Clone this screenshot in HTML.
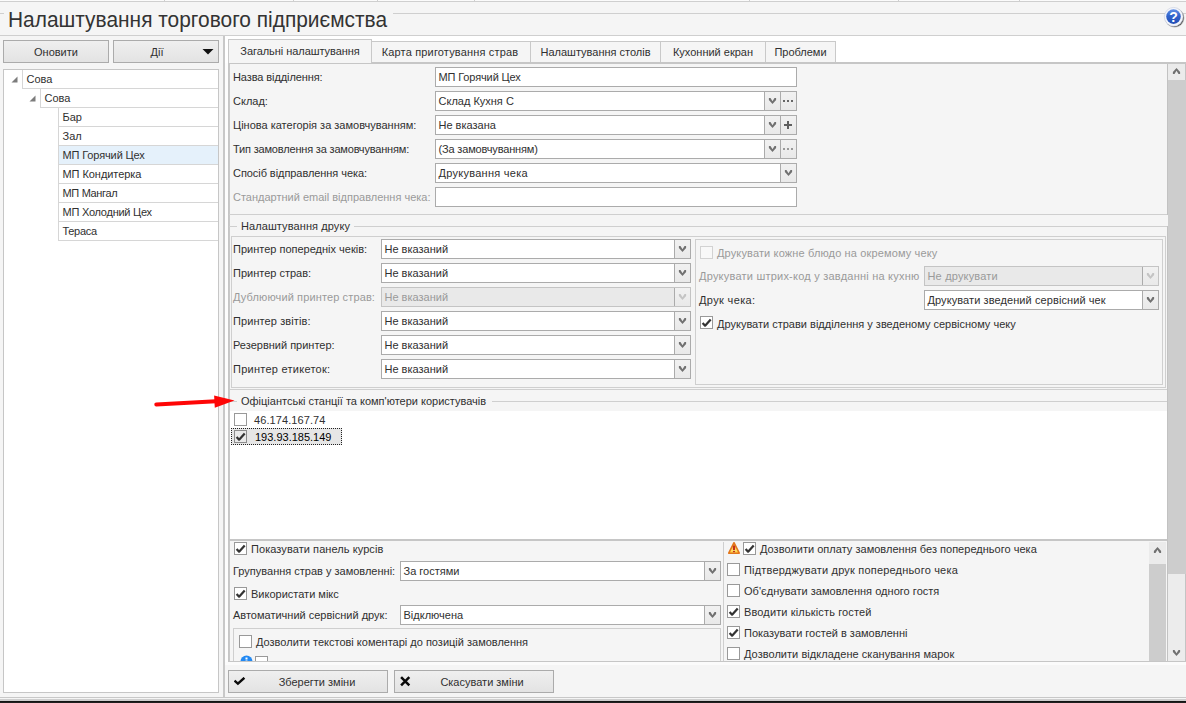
<!DOCTYPE html>
<html lang="uk">
<head>
<meta charset="utf-8">
<title>Налаштування торгового підприємства</title>
<style>
*{box-sizing:border-box;margin:0;padding:0}
html,body{width:1186px;height:703px;overflow:hidden;background:#f5f5f5}
body{font-family:"Liberation Sans","DejaVu Sans",sans-serif;font-size:11px;color:#303030;position:relative}
#app{position:absolute;left:0;top:0;width:1186px;height:703px;overflow:hidden;background:#f5f5f5}
.a{position:absolute}
.hl{position:absolute;height:1px;background:#cfcfcf}
.vl{position:absolute;width:1px;background:#cfcfcf}
.t{position:absolute;white-space:nowrap;height:20px;line-height:20px}
.dis{color:#9a9a9a}
.btn{position:absolute;border:1px solid #ababab;background:linear-gradient(#efefef,#e3e3e3);text-align:center;line-height:21px;padding-top:1px;height:23px;white-space:nowrap}
.inp{position:absolute;height:20px;border:1px solid #ababab;background:#fff;line-height:18px;padding-left:2.5px;white-space:nowrap;overflow:hidden}
.inp.d{background:#e9e9e9;color:#9a9a9a;border-color:#c4c4c4}
.dd{position:absolute;top:0;right:0;width:16px;height:18px;border-left:1px solid #ababab;background:linear-gradient(#f1f1f1,#e9e9e9)}
.dd svg{position:absolute;left:3px;top:5px}
.sb{position:absolute;width:17px;height:20px;border:1px solid #ababab;background:linear-gradient(#f1f1f1,#e9e9e9)}
.cb{position:absolute;width:13px;height:13px;border:1px solid #999;background:#fff}
.cb.d{border-color:#d2d2d2;background:#f8f8f8}
.cb svg{position:absolute;left:0;top:0}
.tab{position:absolute;top:41px;height:22px;border:1px solid #c9c9c9;border-bottom:none;background:#f5f5f5;line-height:20px;text-align:center;white-space:nowrap}
.tab.act{top:39px;height:24px;line-height:23px;z-index:2}
.row{position:absolute;height:19px;line-height:18px;border-bottom:1px solid #d6d6d6;border-left:1px solid #d6d6d6;background:#fff;padding-left:3.5px;right:0;white-space:nowrap}
</style>
</head>
<body>
<div id="app">

<!-- top strip -->
<div class="a" style="left:0;top:0;width:1186px;height:1px;background:#fbfbfb"></div>
<div class="hl" style="left:0;top:1px;width:1186px"></div>
<div class="vl" style="left:164px;top:0;height:1px"></div>
<div class="vl" style="left:293px;top:0;height:1px"></div>
<div class="vl" style="left:377px;top:0;height:1px"></div>
<div class="vl" style="left:474px;top:0;height:1px"></div>
<div class="vl" style="left:749px;top:0;height:1px"></div>
<div class="vl" style="left:898px;top:0;height:1px"></div>
<div class="vl" style="left:1019px;top:0;height:1px"></div>

<!-- title -->
<div class="hl" style="left:0;top:13px;width:4px"></div>
<div class="hl" style="left:393px;top:13px;width:793px"></div>
<div class="a" id="title" style="left:8px;top:5px;height:29px;line-height:29px;font-size:22.5px;color:#333;white-space:nowrap;transform:scaleX(0.929);transform-origin:0 0">Налаштування торгового підприємства</div>
<svg class="a" style="left:1162px;top:5px" width="24" height="24" viewBox="0 0 24 24">
  <defs>
    <linearGradient id="hg" x1="0" y1="0" x2="0" y2="1"><stop offset="0" stop-color="#5f8fe6"/><stop offset="0.45" stop-color="#3264cc"/><stop offset="1" stop-color="#234fb6"/></linearGradient>
    <radialGradient id="hs" cx="0.5" cy="0.5" r="0.5"><stop offset="0.75" stop-color="#444" stop-opacity="0.75"/><stop offset="1" stop-color="#444" stop-opacity="0"/></radialGradient>
  </defs>
  <circle cx="12.7" cy="12.9" r="10.2" fill="url(#hs)"/><circle cx="12.45" cy="12.6" r="9.35" fill="#3c3c3c" opacity="0.8"/>
  <circle cx="11.7" cy="11.8" r="9.4" fill="#f3f5fb" stroke="#c9cfdf" stroke-width="0.6"/>
  <circle cx="11.5" cy="11.6" r="7.3" fill="url(#hg)"/>
  <text x="11.5" y="16.6" text-anchor="middle" font-family="Liberation Sans, sans-serif" font-weight="bold" font-size="14" fill="#fff">?</text>
</svg>
<div class="hl" style="left:0;top:35px;width:1186px"></div>

<!-- left panel -->
<div class="btn" style="left:3px;top:40px;width:106px">Оновити</div>
<div class="btn" style="left:113px;top:40px;width:106px"><span style="position:absolute;left:0;width:86px;text-align:center">Дії</span>
  <svg class="a" style="left:88px;top:8px" width="12" height="6" viewBox="0 0 12 6"><path d="M0.5 0H11.5L6 5.5Z" fill="#111"/></svg>
</div>
<div class="a" id="tree" style="left:3px;top:69px;width:216px;height:624px;background:#fff;border:1px solid #c6c6c6">
  <svg class="a" style="left:7px;top:6px" width="7" height="7" viewBox="0 0 7 7"><path d="M6.5 0.5V6.5H0.5Z" fill="#7c7c7c"/></svg>
  <svg class="a" style="left:25px;top:25px" width="7" height="7" viewBox="0 0 7 7"><path d="M6.5 0.5V6.5H0.5Z" fill="#7c7c7c"/></svg>
  <div class="row" style="left:18px;top:0px">Сова</div>
  <div class="row" style="left:36px;top:19px">Сова</div>
  <div class="row" style="left:54px;top:38px">Бар</div>
  <div class="row" style="left:54px;top:57px">Зал</div>
  <div class="row" style="left:54px;top:76px;background:#e5f1fb;letter-spacing:-0.129px">МП Горячий Цех</div>
  <div class="row" style="left:54px;top:95px;letter-spacing:-0.058px">МП Кондитерка</div>
  <div class="row" style="left:54px;top:114px;letter-spacing:-0.333px">МП Мангал</div>
  <div class="row" style="left:54px;top:133px;letter-spacing:-0.240px">МП Холодний Цех</div>
  <div class="row" style="left:54px;top:152px;letter-spacing:-0.300px">Тераса</div>
</div>

<!-- splitter -->
<div class="a" style="left:223px;top:36px;width:2px;height:662px;background:#c8c8c8"></div>

<!-- tab strip -->
<div class="a" style="left:225px;top:36px;width:3px;height:629px;background:#fdfdfd"></div>
<div class="a" style="left:225px;top:36px;width:961px;height:27px;background:#fff"></div>
<div class="tab act" style="left:228px;width:144px;letter-spacing:-0.057px">Загальні налаштування</div>
<div class="tab" style="left:371px;width:160px;padding-right:2px;letter-spacing:0.167px">Карта приготування страв</div>
<div class="tab" style="left:530px;width:131px">Налаштування столів</div>
<div class="tab" style="left:660px;width:106px">Кухонний екран</div>
<div class="tab" style="left:765px;width:71px">Проблеми</div>

<!-- tab page -->
<div class="a" id="page" style="left:228px;top:63px;width:958px;height:598px;border:1px solid #c6c6c6;border-right:none;border-bottom:none;background:#f5f5f5;overflow:hidden">
<!-- coordinates inside #page are offset by (229,64) -->
<div class="a" id="pg" style="left:-229px;top:-64px;width:1186px;height:703px">

<div class="vl" style="left:229px;top:64px;height:598px;background:#c9c9c9"></div>
<!-- general fields -->
<div class="t" style="left:233px;top:67px;letter-spacing:-0.094px">Назва відділення:</div>
<div class="inp" style="left:435px;top:67px;width:362px;letter-spacing:-0.129px">МП Горячий Цех</div>
<div class="t" style="left:233px;top:91px">Склад:</div>
<div class="inp" style="left:435px;top:91px;width:346px">Склад Кухня С<div class="dd"><svg width="9" height="8" viewBox="0 0 9 8"><path d="M0.9 0.9H2.5L4.5 4.2L6.5 0.9H8.1V3L4.5 7.1L0.9 3Z" fill="#707070"/></svg></div></div>
<div class="sb" style="left:780px;top:91px"><svg class="a" style="left:2px;top:8px" width="10" height="2" viewBox="0 0 10 2"><rect x="0" y="0" width="2" height="2" fill="#666"/><rect x="4" y="0" width="2" height="2" fill="#666"/><rect x="8" y="0" width="2" height="2" fill="#666"/></svg></div>
<div class="t" style="left:233px;top:115px">Цінова категорія за замовчуванням:</div>
<div class="inp" style="left:435px;top:115px;width:346px">Не вказана<div class="dd"><svg width="9" height="8" viewBox="0 0 9 8"><path d="M0.9 0.9H2.5L4.5 4.2L6.5 0.9H8.1V3L4.5 7.1L0.9 3Z" fill="#707070"/></svg></div></div>
<div class="sb" style="left:780px;top:115px"><svg class="a" style="left:3px;top:5px" width="8" height="8" viewBox="0 0 8 8"><rect x="3" y="0" width="2" height="8" fill="#5f5f5f"/><rect x="0" y="3" width="8" height="2" fill="#5f5f5f"/></svg></div>
<div class="t" style="left:233px;top:139px;letter-spacing:-0.178px">Тип замовлення за замовчуванням:</div>
<div class="inp" style="left:435px;top:139px;width:346px;letter-spacing:-0.161px">(За замовчуванням)<div class="dd"><svg width="9" height="8" viewBox="0 0 9 8"><path d="M0.9 0.9H2.5L4.5 4.2L6.5 0.9H8.1V3L4.5 7.1L0.9 3Z" fill="#707070"/></svg></div></div>
<div class="sb" style="left:780px;top:139px"><svg class="a" style="left:2px;top:8px" width="10" height="2" viewBox="0 0 10 2"><rect x="0" y="0" width="2" height="2" fill="#999"/><rect x="4" y="0" width="2" height="2" fill="#999"/><rect x="8" y="0" width="2" height="2" fill="#999"/></svg></div>
<div class="t" style="left:233px;top:163px;letter-spacing:-0.064px">Спосіб відправлення чека:</div>
<div class="inp" style="left:435px;top:163px;width:362px;letter-spacing:0.27px">Друкування чека<div class="dd"><svg width="9" height="8" viewBox="0 0 9 8"><path d="M0.9 0.9H2.5L4.5 4.2L6.5 0.9H8.1V3L4.5 7.1L0.9 3Z" fill="#707070"/></svg></div></div>
<div class="t dis" style="left:233px;top:187px">Стандартний email відправлення чека:</div>
<div class="inp" style="left:435px;top:187px;width:362px"></div>

<!-- splitter band -->
<div class="hl" style="left:229px;top:214px;width:938px"></div>

<!-- print settings group -->
<div class="hl" style="left:229px;top:226px;width:938px"></div>
<div class="t" style="left:237px;top:216px;padding:0 4px;background:#f5f5f5;letter-spacing:0.089px">Налаштування друку</div>
<div class="a" style="left:231px;top:236px;width:935px;height:152px;border:1px solid #cfcfcf"></div>

<div class="t" style="left:233px;top:239px">Принтер попередніх чеків:</div>
<div class="inp" style="left:381px;top:239px;width:310px">Не вказаний<div class="dd"><svg width="9" height="8" viewBox="0 0 9 8"><path d="M0.9 0.9H2.5L4.5 4.2L6.5 0.9H8.1V3L4.5 7.1L0.9 3Z" fill="#707070"/></svg></div></div>
<div class="t" style="left:233px;top:263px">Принтер страв:</div>
<div class="inp" style="left:381px;top:263px;width:310px">Не вказаний<div class="dd"><svg width="9" height="8" viewBox="0 0 9 8"><path d="M0.9 0.9H2.5L4.5 4.2L6.5 0.9H8.1V3L4.5 7.1L0.9 3Z" fill="#707070"/></svg></div></div>
<div class="t dis" style="left:233px;top:287px;letter-spacing:0.125px">Дублюючий принтер страв:</div>
<div class="inp d" style="left:381px;top:287px;width:310px">Не вказаний<div class="dd"><svg width="9" height="8" viewBox="0 0 9 8"><path d="M0.9 0.9H2.5L4.5 4.2L6.5 0.9H8.1V3L4.5 7.1L0.9 3Z" fill="#c4c4c4"/></svg></div></div>
<div class="t" style="left:233px;top:311px;letter-spacing:0.093px">Принтер звітів:</div>
<div class="inp" style="left:381px;top:311px;width:310px">Не вказаний<div class="dd"><svg width="9" height="8" viewBox="0 0 9 8"><path d="M0.9 0.9H2.5L4.5 4.2L6.5 0.9H8.1V3L4.5 7.1L0.9 3Z" fill="#707070"/></svg></div></div>
<div class="t" style="left:233px;top:335px">Резервний принтер:</div>
<div class="inp" style="left:381px;top:335px;width:310px">Не вказаний<div class="dd"><svg width="9" height="8" viewBox="0 0 9 8"><path d="M0.9 0.9H2.5L4.5 4.2L6.5 0.9H8.1V3L4.5 7.1L0.9 3Z" fill="#707070"/></svg></div></div>
<div class="t" style="left:233px;top:359px;letter-spacing:0.259px">Принтер етикеток:</div>
<div class="inp" style="left:381px;top:359px;width:310px">Не вказаний<div class="dd"><svg width="9" height="8" viewBox="0 0 9 8"><path d="M0.9 0.9H2.5L4.5 4.2L6.5 0.9H8.1V3L4.5 7.1L0.9 3Z" fill="#707070"/></svg></div></div>

<div class="a" style="left:695px;top:239px;width:468px;height:146px;border:1px solid #cfcfcf"></div>
<div class="cb d" style="left:700px;top:246px"></div>
<div class="t dis" style="left:717px;top:243px;letter-spacing:0.137px">Друкувати кожне блюдо на окремому чеку</div>
<div class="t dis" style="left:699px;top:266px;letter-spacing:0.218px">Друкувати штрих-код у завданні на кухню</div>
<div class="inp d" style="left:924px;top:266px;width:235px;letter-spacing:0.175px">Не друкувати<div class="dd"><svg width="9" height="8" viewBox="0 0 9 8"><path d="M0.9 0.9H2.5L4.5 4.2L6.5 0.9H8.1V3L4.5 7.1L0.9 3Z" fill="#c4c4c4"/></svg></div></div>
<div class="t" style="left:699px;top:290px;letter-spacing:0.360px">Друк чека:</div>
<div class="inp" style="left:924px;top:290px;width:235px;letter-spacing:0.087px">Друкувати зведений сервісний чек<div class="dd"><svg width="9" height="8" viewBox="0 0 9 8"><path d="M0.9 0.9H2.5L4.5 4.2L6.5 0.9H8.1V3L4.5 7.1L0.9 3Z" fill="#707070"/></svg></div></div>
<div class="cb" style="left:700px;top:316px"><svg width="11" height="11" viewBox="0 0 11 11"><path d="M1.6 5.9L4.1 8.7L9.7 2.4" fill="none" stroke="#333" stroke-width="2.2" stroke-linejoin="round"/></svg></div>
<div class="t" style="left:717px;top:314px">Друкувати страви відділення у зведеному сервісному чеку</div>

<!-- stations group -->
<div class="hl" style="left:230px;top:389px;width:937px"></div>
<div class="hl" style="left:229px;top:401px;width:938px"></div>
<div class="t" style="left:237px;top:391px;padding:0 6px 0 4px;background:#f5f5f5">Офіціантські станції та комп'ютери користувачів</div>
<div class="a" style="left:230px;top:411px;width:937px;height:128px;background:#fff"></div>
<div class="cb" style="left:234px;top:413px"></div>
<div class="t" style="left:254px;top:410px;letter-spacing:0.092px">46.174.167.74</div>
<div class="a" style="left:231px;top:428px;width:111px;height:17px;background:#e6e6e6;border:1px dotted #222"></div>
<div class="cb" style="left:234px;top:430px;background:#e9e9e9;border-color:#8c8c8c"><svg width="11" height="11" viewBox="0 0 11 11"><path d="M1.6 5.9L4.1 8.7L9.7 2.4" fill="none" stroke="#333" stroke-width="2.2" stroke-linejoin="round"/></svg></div>
<div class="t" style="left:255px;top:427px;color:#000">193.93.185.149</div>
<div class="a" style="left:229px;top:539px;width:938px;height:2px;background:#c6c6c6"></div>

<!-- bottom options -->
<div class="cb" style="left:234px;top:542px"><svg width="11" height="11" viewBox="0 0 11 11"><path d="M1.6 5.9L4.1 8.7L9.7 2.4" fill="none" stroke="#333" stroke-width="2.2" stroke-linejoin="round"/></svg></div>
<div class="t" style="left:251px;top:539px;letter-spacing:0.071px">Показувати панель курсів</div>
<div class="t" style="left:233px;top:561px">Групування страв у замовленні:</div>
<div class="inp" style="left:400px;top:561px;width:321px">За гостями<div class="dd"><svg width="9" height="8" viewBox="0 0 9 8"><path d="M0.9 0.9H2.5L4.5 4.2L6.5 0.9H8.1V3L4.5 7.1L0.9 3Z" fill="#707070"/></svg></div></div>
<div class="cb" style="left:234px;top:587px"><svg width="11" height="11" viewBox="0 0 11 11"><path d="M1.6 5.9L4.1 8.7L9.7 2.4" fill="none" stroke="#333" stroke-width="2.2" stroke-linejoin="round"/></svg></div>
<div class="t" style="left:251px;top:584px">Використати мікс</div>
<div class="t" style="left:233px;top:605px">Автоматичний сервісний друк:</div>
<div class="inp" style="left:400px;top:605px;width:321px">Відключена<div class="dd"><svg width="9" height="8" viewBox="0 0 9 8"><path d="M0.9 0.9H2.5L4.5 4.2L6.5 0.9H8.1V3L4.5 7.1L0.9 3Z" fill="#707070"/></svg></div></div>
<div class="a" style="left:233px;top:628px;width:488px;height:60px;border:1px solid #cfcfcf"></div>
<div class="cb" style="left:239px;top:635px"></div>
<div class="t" style="left:256px;top:632px">Дозволити текстові коментарі до позицій замовлення</div>
<svg class="a" style="left:240px;top:655px" width="13" height="13" viewBox="0 0 13 13"><circle cx="6.5" cy="6.5" r="6" fill="#2389f2"/><rect x="5.5" y="5.5" width="2" height="5" fill="#fff"/><rect x="5.5" y="2.5" width="2" height="2" fill="#fff"/></svg>
<div class="cb" style="left:255px;top:656px"></div>
<div class="t" style="left:273px;top:655px">Дозволити коментарі до скасованих позицій</div>

<div class="vl" style="left:723px;top:542px;height:120px"></div>
<svg class="a" style="left:727px;top:541px" width="14" height="14" viewBox="0 0 14 14"><defs><radialGradient id="wg" cx="0.5" cy="0.7" r="0.6"><stop offset="0" stop-color="#fff08a"/><stop offset="0.6" stop-color="#ffcf3f"/><stop offset="1" stop-color="#f59a1f"/></radialGradient></defs><path d="M7 1.7L12.3 12.2H1.7Z" fill="url(#wg)" stroke="#e2761b" stroke-width="1.5" stroke-linejoin="round"/><rect x="5.9" y="4.4" width="2.2" height="4.7" rx="0.6" fill="#c3301a"/><rect x="5.9" y="9.8" width="2.2" height="1.4" fill="#c3301a"/></svg>
<div class="cb" style="left:743px;top:542px"><svg width="11" height="11" viewBox="0 0 11 11"><path d="M1.6 5.9L4.1 8.7L9.7 2.4" fill="none" stroke="#333" stroke-width="2.2" stroke-linejoin="round"/></svg></div>
<div class="t" style="left:760px;top:539px;letter-spacing:0.020px">Дозволити оплату замовлення без попереднього чека</div>
<div class="cb" style="left:727px;top:563px"></div>
<div class="t" style="left:744px;top:560px;letter-spacing:0.189px">Підтверджувати друк попереднього чека</div>
<div class="cb" style="left:727px;top:584px"></div>
<div class="t" style="left:744px;top:581px;letter-spacing:0.029px">Об'єднувати замовлення одного гостя</div>
<div class="cb" style="left:727px;top:605px"><svg width="11" height="11" viewBox="0 0 11 11"><path d="M1.6 5.9L4.1 8.7L9.7 2.4" fill="none" stroke="#333" stroke-width="2.2" stroke-linejoin="round"/></svg></div>
<div class="t" style="left:744px;top:602px;letter-spacing:0.137px">Вводити кількість гостей</div>
<div class="cb" style="left:727px;top:626px"><svg width="11" height="11" viewBox="0 0 11 11"><path d="M1.6 5.9L4.1 8.7L9.7 2.4" fill="none" stroke="#333" stroke-width="2.2" stroke-linejoin="round"/></svg></div>
<div class="t" style="left:744px;top:623px">Показувати гостей в замовленні</div>
<div class="cb" style="left:727px;top:647px"></div>
<div class="t" style="left:744px;top:644px;letter-spacing:0.038px">Дозволити відкладене сканування марок</div>

<!-- inner scrollbar -->
<div class="a" style="left:1149px;top:542px;width:17px;height:119px;background:#cdcdcd"></div>
<div class="a" style="left:1149px;top:542px;width:17px;height:22px;background:#ebebeb"><svg class="a" style="left:4px;top:4px" width="9" height="8" viewBox="0 0 9 8"><path d="M0.9 7.1H2.5L4.5 3.8L6.5 7.1H8.1V5L4.5 0.9L0.9 5Z" fill="#707070"/></svg></div>

</div>
</div>

<!-- outer scrollbar -->
<div class="a" style="left:1167px;top:63px;width:19px;height:598px;background:#ececec;border-left:1px solid #c2c2c2;border-right:1px solid #c4c4c4"></div>
<div class="a" style="left:1168px;top:80px;width:18px;height:494px;background:#cdcdcd"></div>
<div class="a" style="left:1168px;top:63px;width:17px;height:17px;background:#ebebeb"><svg class="a" style="left:4px;top:4px" width="9" height="8" viewBox="0 0 9 8"><path d="M0.9 7.1H2.5L4.5 3.8L6.5 7.1H8.1V5L4.5 0.9L0.9 5Z" fill="#707070"/></svg></div>
<svg class="a" style="left:1172px;top:649px" width="9" height="8" viewBox="0 0 9 8"><path d="M0.9 0.9H2.5L4.5 4.2L6.5 0.9H8.1V3L4.5 7.1L0.9 3Z" fill="#707070"/></svg>
<div class="hl" style="left:372px;top:62px;width:814px;background:#c6c6c6"></div>
<div class="hl" style="left:228px;top:63px;width:958px;background:#c6c6c6"></div>
<div class="hl" style="left:228px;top:661px;width:958px;background:#c6c6c6"></div>
<div class="a" style="left:225px;top:662px;width:961px;height:3px;background:#fbfbfb"></div>

<div class="a" style="left:1167px;top:215px;width:1px;height:11px;background:#f5f5f5"></div>
<!-- bottom buttons -->
<div class="btn" style="left:228px;top:670px;width:160px"><svg class="a" style="left:5px;top:6px" width="12" height="9" viewBox="0 0 12 9"><path d="M0.5 3.7L3.9 6.7L10.4 0.8" fill="none" stroke="#0a0a0a" stroke-width="2.4" stroke-linejoin="miter"/></svg><span style="position:absolute;left:0;width:100%;padding-left:18px">Зберегти зміни</span></div>
<div class="btn" style="left:394px;top:670px;width:160px"><svg class="a" style="left:5px;top:5px" width="11" height="11" viewBox="0 0 11 11"><path d="M1.1 1.1L9.3 9.3M9.3 1.1L1.1 9.3" fill="none" stroke="#0a0a0a" stroke-width="2.5"/></svg><span style="position:absolute;left:0;width:100%;padding-left:16px">Скасувати зміни</span></div>

<!-- bottom edge -->
<div class="hl" style="left:0;top:697px;width:1186px;background:#c8c8c8"></div>
<div class="hl" style="left:0;top:698px;width:1186px;background:#f5f5f5"></div>
<div class="a" style="left:0;top:699px;width:1186px;height:2px;background:#cecece"></div>
<div class="a" style="left:0;top:701px;width:1186px;height:1px;background:#141414"></div>
<div class="a" style="left:0;top:702px;width:1186px;height:1px;background:#202020"></div>

<!-- red arrow annotation -->
<svg class="a" style="left:150px;top:390px;z-index:5" width="90" height="24" viewBox="0 0 90 24"><path d="M6.3 14.4L66 11.3" stroke="#fe0606" stroke-width="4" stroke-linecap="round" fill="none"/><path d="M64.1 5.6L84.5 10.4L64.8 17.8Z" fill="#fe0606"/></svg>

</div>
</body>
</html>
